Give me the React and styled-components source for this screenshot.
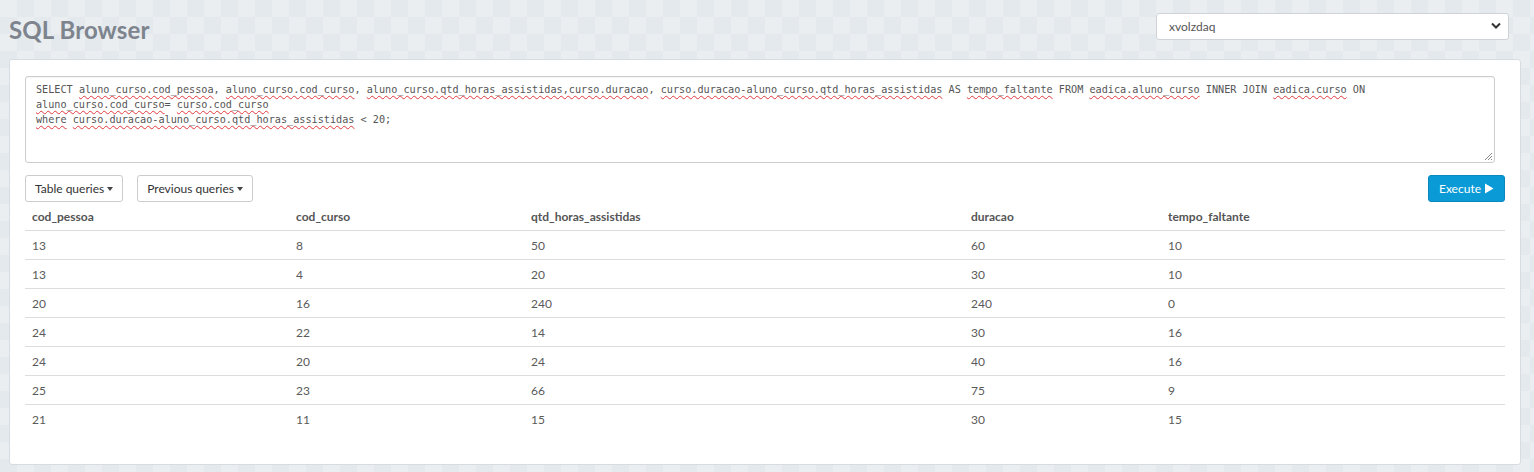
import React from "react";
import styled, { createGlobalStyle } from "styled-components";

const Global = createGlobalStyle`
  html, body { margin: 0; padding: 0; }
  body {
    background-color: #e7ecef;
    background-image:
      conic-gradient(#e4e9ed 25%, #eaeef1 0 50%, #e4e9ed 0 75%, #eaeef1 0);
    background-size: 34px 34px;
    font-family: Lato, "Open Sans", sans-serif;
    font-size: 12px;
    color: #555;
    min-height: 472px;
  }
`;

const Page = styled.div`
  padding: 0 13px 0 9px;
`;

const Header = styled.header`
  display: flex;
  align-items: center;
  justify-content: space-between;
  height: 59px;
  padding-right: 12px;
`;

const Title = styled.h1`
  margin: 0;
  font-family: Lato, "Open Sans", sans-serif;
  font-weight: 700;
  font-size: 24px;
  color: #7e848d;
  letter-spacing: 0.1px;
  margin-top: -1px;
`;

const SelectWrap = styled.div`
  position: relative;
  width: 353px;
  margin-top: -6px;
`;

const Select = styled.select`
  appearance: none;
  -webkit-appearance: none;
  width: 100%;
  height: 27px;
  border: 1px solid #cfd3d7;
  border-radius: 3px;
  background: #fff;
  padding: 0 12px;
  font-family: Lato, "Open Sans", sans-serif;
  font-size: 12px;
  color: #555;
  outline: none;
`;

const Chevron = styled.svg`
  position: absolute;
  right: 8px;
  top: 9px;
  pointer-events: none;
`;

const Panel = styled.section`
  background: #fff;
  border: 1px solid #d6dde2;
  border-radius: 3px;
  padding: 16px 15px 31px 15px;
`;

const EditorWrap = styled.div`
  position: relative;
  width: 1470px;
`;

const Editor = styled.div`
  box-sizing: border-box;
  height: 87px;
  border: 1px solid #cccccc;
  border-radius: 3px;
  padding: 5px 10px;
  font-family: "DejaVu Sans Mono", "Liberation Mono", monospace;
  font-size: 10.18px;
  line-height: 15px;
  color: #555;
  white-space: pre;
  box-shadow: inset 0 1px 1px rgba(0, 0, 0, 0.04);
`;

const Misspelled = styled.span`
  text-decoration: underline wavy #e0393e;
  text-decoration-thickness: 1px;
  text-underline-offset: 2px;
  text-decoration-skip-ink: none;
`;

const Grip = styled.svg`
  position: absolute;
  right: 2px;
  bottom: 2px;
`;

const Toolbar = styled.div`
  display: flex;
  align-items: center;
  gap: 14px;
  margin-top: 12px;
`;

const Button = styled.button`
  box-sizing: border-box;
  height: 27px;
  display: inline-flex;
  align-items: center;
  gap: 3px;
  padding: 0 ${(p) => (p.$primary ? "10px" : "9px")};
  border-radius: 3px;
  font-family: Lato, "Open Sans", sans-serif;
  font-size: 12px;
  line-height: 17px;
  cursor: pointer;
  border: 1px solid ${(p) => (p.$primary ? "#0a87bd" : "#cccccc")};
  background: ${(p) => (p.$primary ? "#0a9ad6" : "#fff")};
  color: ${(p) => (p.$primary ? "#fff" : "#333")};
  margin-left: ${(p) => (p.$push ? "auto" : "0")};
`;

const Caret = styled.span`
  display: inline-block;
  width: 0;
  height: 0;
  border-left: 3.5px solid transparent;
  border-right: 3.5px solid transparent;
  border-top: 4px solid #444;
  margin-top: 1px;
`;

const Table = styled.table`
  width: 1480px;
  border-collapse: collapse;
  table-layout: fixed;
  font-family: Lato, "Open Sans", sans-serif;
  font-size: 12px;
`;

const Th = styled.th`
  box-sizing: border-box;
  text-align: left;
  font-weight: 700;
  color: #555;
  padding: 6px 7px 5px;
  line-height: 17px;
  border-bottom: 1px solid #dddddd;
  width: ${(p) => p.$w}px;
`;

const Td = styled.td`
  padding: 6px 7px 5px;
  line-height: 17px;
  color: #5a5a5a;
  border-top: 1px solid #dddddd;
`;

const Row = styled.tr`
  &:first-child td { border-top: 0; }
`;

const columns = [
  { name: "cod_pessoa", w: 264 },
  { name: "cod_curso", w: 235 },
  { name: "qtd_horas_assistidas", w: 440 },
  { name: "duracao", w: 197 },
  { name: "tempo_faltante", w: 344 },
];

const rows = [
  [13, 8, 50, 60, 10],
  [13, 4, 20, 30, 10],
  [20, 16, 240, 240, 0],
  [24, 22, 14, 30, 16],
  [24, 20, 24, 40, 16],
  [25, 23, 66, 75, 9],
  [21, 11, 15, 30, 15],
];

const M = ({ children }) => <Misspelled>{children}</Misspelled>;

export default function App() {
  return (
    <>
      <Global />
      <Page>
        <Header>
          <Title>SQL Browser</Title>
          <SelectWrap>
            <Select defaultValue="xvolzdaq">
              <option value="xvolzdaq">xvolzdaq</option>
            </Select>
            <Chevron width="10" height="8" viewBox="0 0 10 8">
              <path d="M1 1.5 L5 5.5 L9 1.5" fill="none" stroke="#333" strokeWidth="2" />
            </Chevron>
          </SelectWrap>
        </Header>
        <Panel>
          <EditorWrap>
            <Editor>
              SELECT <M>aluno_curso.cod_pessoa</M>, <M>aluno_curso.cod_curso</M>,{" "}
              <M>aluno_curso.qtd_horas_assistidas,curso.duracao</M>,{" "}
              <M>curso.duracao-aluno_curso.qtd_horas_assistidas</M> AS{" "}
              <M>tempo_faltante</M> FROM <M>eadica.aluno_curso</M> INNER JOIN{" "}
              <M>eadica.curso</M> ON{"\n"}
              <M>aluno_curso.cod_curso</M>= <M>curso.cod_curso</M>
              {"\n"}
              <M>where</M> <M>curso.duracao-aluno_curso.qtd_horas_assistidas</M> &lt; 20;
            </Editor>
            <Grip width="9" height="9" viewBox="0 0 9 9">
              <path d="M8 1 L1 8 M8 4 L4 8 M8 7 L7 8" stroke="#888" strokeWidth="1" />
            </Grip>
          </EditorWrap>
          <Toolbar>
            <Button>
              Table queries <Caret />
            </Button>
            <Button>
              Previous queries <Caret />
            </Button>
            <Button $primary $push>
              Execute
              <svg width="10" height="11" viewBox="0 0 10 11">
                <path d="M1 0.5 L9.5 5.5 L1 10.5 Z" fill="#fff" />
              </svg>
            </Button>
          </Toolbar>
          <Table>
            <thead>
              <tr>
                {columns.map((c) => (
                  <Th key={c.name} $w={c.w}>
                    {c.name}
                  </Th>
                ))}
              </tr>
            </thead>
            <tbody>
              {rows.map((r, i) => (
                <Row key={i}>
                  {r.map((v, j) => (
                    <Td key={j}>{v}</Td>
                  ))}
                </Row>
              ))}
            </tbody>
          </Table>
        </Panel>
      </Page>
    </>
  );
}
